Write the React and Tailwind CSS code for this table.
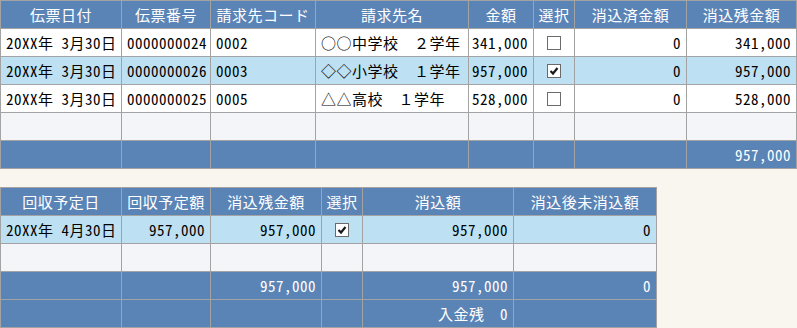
import React from 'react';

const FONT = { fontFamily: '"Noto Sans Mono CJK JP", "Noto Sans CJK JP", "DejaVu Sans Mono", monospace' };

const bills = [
  { date: '20XX年 3月30日', no: '0000000024', code: '0002', name: '○○中学校　２学年', amount: '341,000', checked: false, done: '0', rest: '341,000', bg: 'bg-white' },
  { date: '20XX年 3月30日', no: '0000000026', code: '0003', name: '◇◇小学校　１学年', amount: '957,000', checked: true, done: '0', rest: '957,000', bg: 'bg-[#bde0f2]' },
  { date: '20XX年 3月30日', no: '0000000025', code: '0005', name: '△△高校　１学年', amount: '528,000', checked: false, done: '0', rest: '528,000', bg: 'bg-white' },
];

function Check({ checked }) {
  return (
    <span className="w-[14px] h-[14px] border border-[#6b6b6b] bg-white flex items-center justify-center">
      {checked && (
        <svg width="12" height="12" viewBox="0 0 12 12">
          <path d="M2.5 6 L5 8.5 L9.5 3" stroke="#1a1a1a" strokeWidth="2.2" fill="none" />
        </svg>
      )}
    </span>
  );
}

// one grid cell; align: l / r / c
function Cell({ children, align = 'l', bg = 'bg-white', light = false }) {
  const pos = align === 'r' ? 'justify-end pr-[5px]' : align === 'c' ? 'justify-center' : 'justify-start pl-[5px]';
  return (
    <div className={`flex items-center whitespace-pre overflow-hidden ${pos} ${bg} ${light ? 'text-white' : 'text-black'}`}>
      {children}
    </div>
  );
}

const Head = ({ children }) => <Cell align="c" bg="bg-[#5b84b6]" light>{children}</Cell>;
const Foot = ({ children, align = 'r' }) => <Cell align={align} bg="bg-[#5b84b6]" light>{children}</Cell>;

export default function App() {
  return (
    <div className="min-h-screen bg-[#f9f6ef] text-[15px] tracking-[0.5px] font-light leading-none" style={FONT}>
      {/* 請求 */}
      <div className="grid grid-cols-[120px_88px_104px_152px_64px_40px_111px_109px] auto-rows-[27px] gap-px p-px bg-[#a3a3a3] w-[797px]">
        {['伝票日付', '伝票番号', '請求先コード', '請求先名', '金額', '選択', '消込済金額', '消込残金額'].map((h) => (
          <Head key={h}>{h}</Head>
        ))}
        {bills.map((b) => (
          <React.Fragment key={b.no}>
            <Cell bg={b.bg}>{b.date}</Cell>
            <Cell bg={b.bg}>{b.no}</Cell>
            <Cell bg={b.bg}>{b.code}</Cell>
            <Cell bg={b.bg}>{b.name}</Cell>
            <Cell bg={b.bg} align="r">{b.amount}</Cell>
            <Cell bg={b.bg} align="c"><Check checked={b.checked} /></Cell>
            <Cell bg={b.bg} align="r">{b.done}</Cell>
            <Cell bg={b.bg} align="r">{b.rest}</Cell>
          </React.Fragment>
        ))}
        {Array.from({ length: 8 }).map((_, i) => (
          <Cell key={'e' + i} bg="bg-[#f3f5f9]" />
        ))}
        {Array.from({ length: 7 }).map((_, i) => (
          <Foot key={'f' + i} />
        ))}
        <Foot>957,000</Foot>
      </div>

      {/* 回収 */}
      <div className="mt-[18px] grid grid-cols-[120px_88px_110px_40px_150px_142px] auto-rows-[27px] gap-px p-px bg-[#a3a3a3] w-[657px]">
        {['回収予定日', '回収予定額', '消込残金額', '選択', '消込額', '消込後未消込額'].map((h) => (
          <Head key={h}>{h}</Head>
        ))}
        <Cell bg="bg-[#bde0f2]">20XX年 4月30日</Cell>
        <Cell bg="bg-[#bde0f2]" align="r">957,000</Cell>
        <Cell bg="bg-[#bde0f2]" align="r">957,000</Cell>
        <Cell bg="bg-[#bde0f2]" align="c"><Check checked /></Cell>
        <Cell bg="bg-[#bde0f2]" align="r">957,000</Cell>
        <Cell bg="bg-[#bde0f2]" align="r">0</Cell>
        {Array.from({ length: 6 }).map((_, i) => (
          <Cell key={'e' + i} bg="bg-[#f3f5f9]" />
        ))}
        <Foot />
        <Foot />
        <Foot>957,000</Foot>
        <Foot />
        <Foot>957,000</Foot>
        <Foot>0</Foot>
        <Foot />
        <Foot />
        <Foot />
        <Foot />
        <Foot>入金残　0</Foot>
        <Foot />
      </div>
    </div>
  );
}
